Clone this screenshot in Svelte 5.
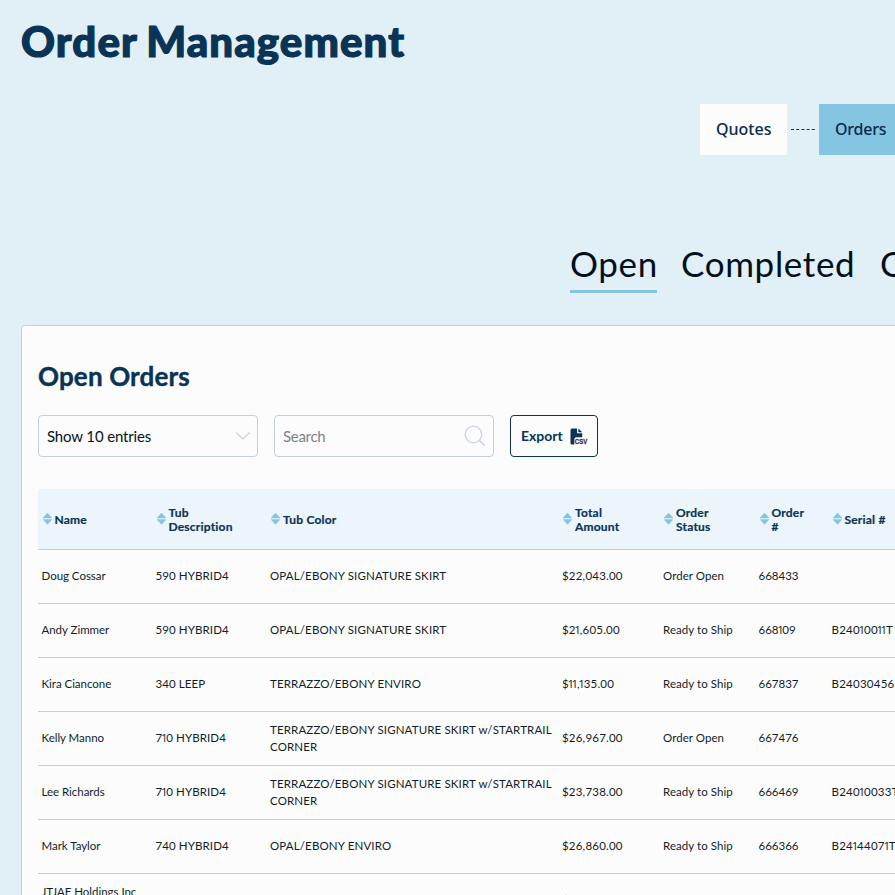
<script>
  const columns = [
    { label: 'Name', width: 114 },
    { label: 'Tub\nDescription', width: 114.5 },
    { label: 'Tub Color', width: 292 },
    { label: 'Total\nAmount', width: 101 },
    { label: 'Order\nStatus', width: 95.5 },
    { label: 'Order\n#', width: 73 },
    { label: 'Serial #', width: 110 }
  ];
  const rows = [
    ['Doug Cossar', '590 HYBRID4', 'OPAL/EBONY SIGNATURE SKIRT', '$22,043.00', 'Order Open', '668433', ''],
    ['Andy Zimmer', '590 HYBRID4', 'OPAL/EBONY SIGNATURE SKIRT', '$21,605.00', 'Ready to Ship', '668109', 'B24010011T'],
    ['Kira Ciancone', '340 LEEP', 'TERRAZZO/EBONY ENVIRO', '$11,135.00', 'Ready to Ship', '667837', 'B24030456'],
    ['Kelly Manno', '710 HYBRID4', 'TERRAZZO/EBONY SIGNATURE SKIRT w/STARTRAIL\nCORNER', '$26,967.00', 'Order Open', '667476', ''],
    ['Lee Richards', '710 HYBRID4', 'TERRAZZO/EBONY SIGNATURE SKIRT w/STARTRAIL\nCORNER', '$23,738.00', 'Ready to Ship', '666469', 'B24010033T'],
    ['Mark Taylor', '740 HYBRID4', 'OPAL/EBONY ENVIRO', '$26,860.00', 'Ready to Ship', '666366', 'B24144071T'],
    ['JTJAE Holdings Inc\n ', '', 'TERRAZZO/', '$', '', '', '']
  ];
  const classes = ['name', 'desc', 'color', 'amount', 'status', 'number', 'serial'];
  // Separates the digit 1 so that it can be set narrower than the other digits.
  const pieces = (text) => text.split(/(1)/).filter(Boolean);
</script>

<div class="page">
  <h1>Order Management</h1>

  <nav class="steps">
    <span class="step">Quotes</span>
    <svg class="dash" width="24" height="1" viewBox="0 0 24 1"><path d="M0 .5H24" stroke="#0a3355" stroke-dasharray="3 2.2" /></svg>
    <span class="step active">Orders</span>
  </nav>

  <nav class="tabs">
    <span class="tab open">Open</span>
    <span class="tab completed">Completed</span>
    <span class="tab">Cancelled</span>
  </nav>

  <section class="card">
    <h2>Open Orders</h2>
    <div class="tools">
      <div class="field select">
        <span>Show 10 entries</span>
        <svg width="16" height="10" viewBox="0 0 16 10"><path d="M1.3 1.5 8 8.2 14.7 1.5" fill="none" stroke="#c9d2dd" stroke-width="1.3" /></svg>
      </div>
      <div class="field search">
        <span>Search</span>
        <svg width="22" height="22" viewBox="0 0 22 22"><circle cx="9.5" cy="9.5" r="8.3" fill="none" stroke="#c9d2dd" stroke-width="1.3" /><path d="m15.3 15.3 5.5 5.3" stroke="#c9d2dd" stroke-width="1.5" /></svg>
      </div>
      <button class="export">
        <span>Export</span>
        <svg width="18" height="17" viewBox="0 0 18 17">
          <path d="M2 .5H7V5.3H12.2V9.3H6.5Q4.3 9.3 4.3 11.5V16.5H2Q.5 16.5.5 15V2Q.5.5 2 .5Z" fill="#0a3355" />
          <path d="M8.3.5 12.3 4.2H8.3Z" fill="#0a3355" />
          <text x="4.8" y="16.2" textLength="12.5" lengthAdjust="spacingAndGlyphs">CSV</text>
        </svg>
      </button>
    </div>

    <table>
      <colgroup>
        {#each columns as col}<col style="width: {col.width}px" />{/each}
      </colgroup>
      <thead>
        <tr>
          {#each columns as col}
            <th>
              <div class="head">
                <svg width="9" height="12" viewBox="0 0 9 12"><path d="M4.5 0 9 5H0ZM0 6.4H9L4.5 11.4Z" fill="#84c5e1" stroke="#84c5e1" stroke-width="0.4" /></svg>
                <span>{col.label}</span>
              </div>
            </th>
          {/each}
        </tr>
      </thead>
      <tbody>
        {#each rows as row}
          <tr>
            {#each row as cell, i}<td class={classes[i]}>{#each pieces(cell) as piece}{#if piece === '1'}<span class="one">1</span>{:else}{piece}{/if}{/each}</td>{/each}
          </tr>
        {/each}
      </tbody>
    </table>
  </section>
</div>

<style>
  :global(body) { background: #e1eff6; overflow: hidden; }
  .page {
    box-sizing: border-box;
    width: 895px;
    height: 895px;
    overflow: hidden;
    background: #e1eff6;
    font-family: Lato, 'Noto Sans', sans-serif;
    color: #0a3355;
  }
  h1 {
    margin: 0;
    padding: 15px 0 1px 21px;
    font-size: 42px;
    line-height: 52px;
    font-weight: 900;
    letter-spacing: 1.1px;
    word-spacing: -2px;
    -webkit-text-stroke: 1.2px #0a3355;
    white-space: nowrap;
  }
  .steps { display: flex; align-items: center; padding: 36px 0 0 700px; }
  .step {
    box-sizing: border-box;
    flex: none;
    width: 87px;
    height: 51px;
    line-height: 51px;
    padding-left: 16px;
    background: #fcfcfc;
    color: #0a2a49;
    font-family: 'Noto Sans', sans-serif;
    font-size: 16px;
    font-weight: 500;
  }
  .step.active { background: #84c5e1; letter-spacing: -0.2px; }
  .dash { flex: none; margin: 0 4px; }
  .tabs { display: flex; gap: 24px; padding: 83px 0 0 570px; height: 55px; }
  .tab {
    box-sizing: border-box;
    flex: none;
    height: 55px;
    line-height: 51px;
    font-size: 35px;
    letter-spacing: 0.65px;
    color: #020f1c;
    white-space: nowrap;
  }
  .open { width: 87px; border-bottom: 3px solid #84c5e1; }
  .completed { width: 175px; }
  .card {
    box-sizing: border-box;
    width: 960px;
    height: 700px;
    margin: 32px 0 0 21px;
    padding: 34px 16px 0;
    border: 1px solid #c1cdd8;
    border-radius: 4px;
    background: #fcfcfc;
  }
  h2 {
    margin: 0;
    font-size: 26px;
    line-height: 32px;
    font-weight: 700;
    letter-spacing: 0.15px;
    -webkit-text-stroke: 0.4px #0a3355;
    white-space: nowrap;
  }
  .tools { display: flex; gap: 16px; margin-top: 23px; }
  .field {
    box-sizing: border-box;
    width: 220px;
    height: 42px;
    display: flex;
    align-items: center;
    justify-content: space-between;
    border: 1px solid #c5cfdb;
    border-radius: 4px;
    padding: 0 6px 0 8px;
    font-size: 15px;
    letter-spacing: -0.15px;
    color: #06111d;
  }
  .search { color: #7c838a; padding-right: 7px; letter-spacing: -0.3px; }
  .export {
    box-sizing: border-box;
    width: 88px;
    height: 42px;
    display: flex;
    align-items: center;
    justify-content: space-between;
    padding: 0 9px 0 10px;
    border: 1px solid #0a3355;
    border-radius: 4px;
    background: #fcfcfc;
    color: #0a3355;
    font: 700 14px Lato, sans-serif;
  }
  .export span { padding-bottom: 1px; }
  .export text { font: 700 7.5px 'Liberation Sans', sans-serif; fill: #4b3338; stroke: #4b3338; stroke-width: 0.3; }
  table { width: 900px; table-layout: fixed; border-collapse: separate; border-spacing: 0; margin-top: 32px; }
  th, td { box-sizing: border-box; border-bottom: 1px solid #c1cdd8; text-align: left; vertical-align: middle; white-space: pre; }
  th { height: 61px; padding: 0 0 0 4.5px; background: #ebf5fb; font-size: 12px; line-height: 14px; font-weight: 700; letter-spacing: 0.2px; -webkit-text-stroke: 0.2px #0a3355; }
  .head { display: flex; align-items: center; gap: 3px; }
  .head svg { margin-top: -1px; }
  .head span { padding-top: 1px; }
  td { height: 54px; padding: 0 0 2px 3.5px; font-size: 11.5px; line-height: 17px; color: #101d29; }
  .name { letter-spacing: -0.03px; }
  .desc { letter-spacing: 0.1px; }
  .color { letter-spacing: 0.14px; }
  .amount { letter-spacing: 0.2px; }
  .serial { letter-spacing: 0.25px; }
  .status { letter-spacing: 0.06px; }
  .one { font-family: 'Open Sans', sans-serif; margin: 0 -1.4px; }
</style>
